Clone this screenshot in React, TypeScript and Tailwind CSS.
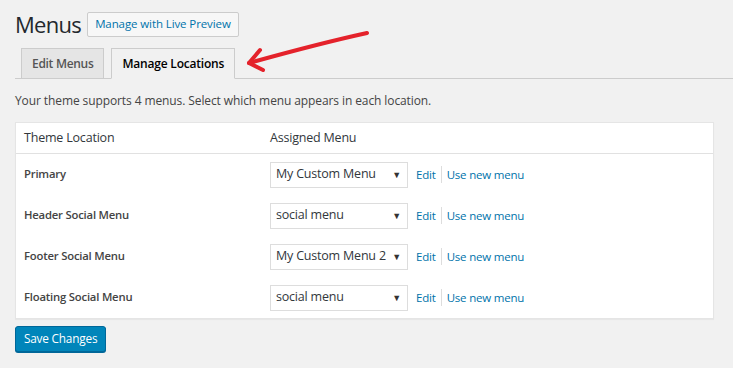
const locations = [
  { name: "Primary", menu: "My Custom Menu" },
  { name: "Header Social Menu", menu: "social menu" },
  { name: "Footer Social Menu", menu: "My Custom Menu 2" },
  { name: "Floating Social Menu", menu: "social menu" },
];

function FakeSelect({ value }: { value: string }) {
  return (
    <div className="w-[138px] h-[26px] border border-[#ddd] bg-white flex items-center justify-between pl-[5px] pr-[6px] text-[12.5px] tracking-[-0.2px] text-[#32373c]">
      <span className="whitespace-nowrap">{value}</span>
      <span className="text-[9px] text-[#333] leading-none">▼</span>
    </div>
  );
}

export default function App() {
  return (
    <div
      className="relative w-[733px] h-[368px] overflow-hidden bg-[#f1f1f1] text-[#444] pl-[15px]"
      style={{ fontFamily: '"Open Sans", "Noto Sans", sans-serif' }}
    >
      {/* Title */}
      <div className="flex items-center pt-[12px] h-[24px] box-content">
        <h1 className="text-[22px] leading-none text-[#23282d] font-normal tracking-[-0.7px]">Menus</h1>
        <button className="ml-[6px] h-[25px] px-[7px] border border-[#ccc] bg-[#f7f7f7] text-[#0073aa] text-[11.5px] tracking-[-0.1px] rounded-[2px] leading-none">
          Manage with Live Preview
        </button>
      </div>

      {/* Tabs */}
      <div className="mt-[13px] flex items-end gap-[7px] pl-[6px] border-b border-[#ccc] h-[30px]">
        <div className="h-[31px] -mb-px px-[10px] flex items-center border border-[#ccc] bg-[#e5e5e5] text-[#555] text-[12px] font-semibold tracking-[-0.3px]">
          Edit Menus
        </div>
        <div className="h-[31px] -mb-px px-[10px] flex items-center border border-[#ccc] border-b-[#f1f1f1] bg-[#f1f1f1] text-[#000] text-[12px] font-semibold tracking-[-0.2px]">
          Manage Locations
        </div>
      </div>

      {/* Red arrow annotation */}
      <svg className="absolute left-[240px] top-[26px]" width="135" height="50" viewBox="0 0 135 50">
        <g stroke="#e4222b" strokeWidth="4" strokeLinecap="round" strokeLinejoin="round" fill="none">
          <path d="M127 7 C 95 14, 45 27, 9 37" />
          <path d="M20 24 L 9 37 L 23 44" />
        </g>
      </svg>

      <p className="mt-[14px] text-[12px] tracking-[-0.1px] text-[#444] leading-[16px]">
        Your theme supports 4 menus. Select which menu appears in each location.
      </p>

      {/* Locations table */}
      <div className="mt-[13px] w-[699px] bg-white border border-[#e5e5e5] shadow-[0_1px_1px_rgba(0,0,0,0.04)]">
        <div className="flex items-center h-[31px] border-b border-[#e1e1e1] text-[12.5px] tracking-[-0.2px] text-[#32373c]">
          <div className="w-[254px] pl-[8px]">Theme Location</div>
          <div>Assigned Menu</div>
        </div>
        <div>
          {locations.map((loc) => (
            <div key={loc.name} className="flex items-center h-[41px]">
              <div className="w-[254px] pl-[8px] text-[11.3px] font-semibold tracking-[-0.2px] text-[#444]">{loc.name}</div>
              <FakeSelect value={loc.menu} />
              <div className="ml-[8px] flex items-center text-[11.5px] tracking-[-0.2px] text-[#0073aa]">
                <span>Edit</span>
                <span className="mx-[5px] w-px h-[17px] bg-[#ddd]" />
                <span>Use new menu</span>
              </div>
            </div>
          ))}
        </div>
      </div>

      <button className="mt-[7px] h-[26px] px-[8px] bg-[#0085ba] border border-[#006799] rounded-[3px] text-white text-[11.8px] tracking-[-0.2px] shadow-[0_1px_0_#006799]">
        Save Changes
      </button>
    </div>
  );
}
